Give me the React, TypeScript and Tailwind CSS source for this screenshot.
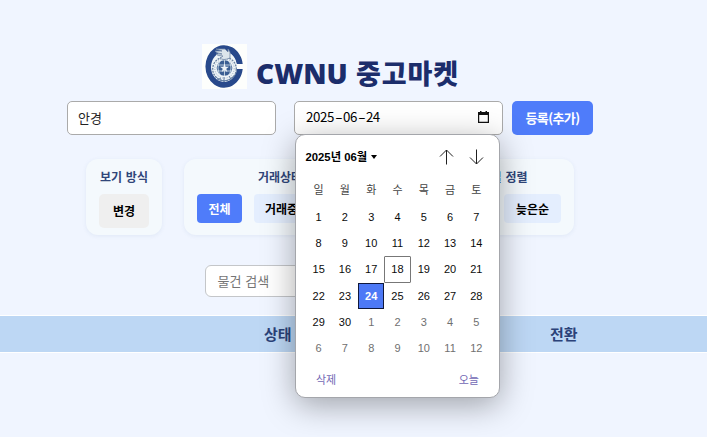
import React from "react";

const weekdays = ["일", "월", "화", "수", "목", "금", "토"];
const days = [
  ...Array.from({ length: 30 }, (_, i) => ({ n: i + 1, out: false })),
  ...Array.from({ length: 12 }, (_, i) => ({ n: i + 1, out: true })),
];

function Logo() {
  return (
    <svg viewBox="0 0 45 45" className="h-[45px] w-[45px] shrink-0 bg-[#fdfefc]">
      <path d="M40.700 25A18.700 21.200 0 1 1 40.700 20H34.500A12 15 0 1 0 34.500 25Z" fill="#28498b" />
      <ellipse cx="22" cy="23" rx="13" ry="15" fill="#eff5f8" />
      <circle cx="22.500" cy="25" r="11.800" fill="none" stroke="#68809f" strokeWidth="1.300" strokeDasharray="2 1" />
      <circle cx="22.500" cy="24.500" r="9.700" fill="none" stroke="#9badc1" strokeWidth="1" strokeDasharray="1 1.400" />
      <circle cx="22.500" cy="24" r="7.800" fill="#3b5f93" />
      <path d="M15 21h15M15 27h15M22.500 16v16M18 17q-4 7 0 14M27 17q4 7 0 14" fill="none" stroke="#dce7ee" strokeWidth=".8" />
      <path d="M22.500 19.500l1.100 3.200H27l-2.700 2 1 3.200-2.800-1.900-2.800 1.900 1-3.200-2.700-2h3.400z" fill="#eef4f8" />
      <path d="M14 5h9l3 3V5l2 3v6q-7 3-10 0 2-1 3-2-6 0-7-2h6q-6-1-7-3h7z" fill="#dce6ec" stroke="#6c84a5" strokeWidth=".8" />
      <path d="M13 32q4 5 9 5t10-5M15 36l4-2m3 4v-5m7 2l-2-3" fill="none" stroke="#617da3" strokeWidth="1" />
    </svg>
  );
}

function Card({ children, className }: { children: React.ReactNode; className: string }) {
  return (
    <section className={`flex h-[76px] rounded-[12px] bg-[#f4f9fd] pt-[7px] shadow-[0_1px_4px_rgba(70,100,160,0.09)] ${className}`}>
      {children}
    </section>
  );
}

function Title({ children }: { children: React.ReactNode }) {
  return <h2 className="h-5 whitespace-nowrap pt-px text-center text-[12px] font-bold leading-5 text-[#30467a] [word-spacing:1px]">{children}</h2>;
}

function DatePicker() {
  return (
    <div className="absolute left-px top-[33px] z-10 h-[264px] w-[205px] rounded-[10px] border border-[#a4a6ab] bg-white px-[9.5px] font-['Liberation_Sans','Noto_Sans_CJK_KR',sans-serif] text-[11px] text-[#0b0b0b] shadow-[0_7px_32px_rgba(0,0,0,0.34)]">
      <div className="flex h-[43px] items-center">
        <strong className="whitespace-nowrap text-[11.3px] leading-4 text-black">2025년 06월</strong>
        <span className="ml-1 border-x-[3.5px] border-t-4 border-x-transparent border-t-black" />
        <svg className="ml-auto h-4 w-[15px]" viewBox="0 0 15 16" fill="none" stroke="#202020">
          <path d="M7.500 1v14.500M1 7.500l6.500-6.500L14 7.500" />
        </svg>
        <svg className="ml-[15px] mr-1.5 h-4 w-[15px]" viewBox="0 0 15 16" fill="none" stroke="#202020">
          <path d="M7.500.5V15M1 8.500L7.500 15 14 8.500" />
        </svg>
      </div>
      <div className="grid h-[26px] grid-cols-7 text-center text-[#444]">
        {weekdays.map((day) => <span key={day} className="h-5 pt-1 leading-4">{day}</span>)}
      </div>
      <div className="grid auto-rows-[26.2px] grid-cols-7 text-center leading-4">
        {days.map((day, i) => (
          <span
            key={i}
            className={`flex items-center justify-center border ${
              i === 23
                ? "border-[#10183b] bg-[#4d79f6] font-bold text-white"
                : i === 17
                  ? "rounded-[1px] border-[#777]"
                  : day.out
                    ? "border-transparent text-[#707070]"
                    : "border-transparent"
            }`}
          >
            {day.n}
          </span>
        ))}
      </div>
      <div className="flex justify-between px-[10.5px] pt-[11px] leading-4 text-[#7268b5]">
        <span>삭제</span>
        <span>오늘</span>
      </div>
    </div>
  );
}

export default function App() {
  return (
    <main className="h-[437px] w-[707px] overflow-hidden bg-[#f0f5ff] font-['Noto_Sans_CJK_KR',sans-serif]">
      <header className="flex h-[101px] pl-[202px] pt-11">
        <Logo />
        <h1 className="ml-[9px] mt-[9px] flex whitespace-pre text-[27px] font-black leading-10 text-[#1c2d6b]">
          <span className="w-[100px] font-['Noto_Sans',sans-serif] text-[28px]">CWNU </span>
          <span className="tracking-[0.9px]">중고마켓</span>
        </h1>
      </header>

      <form className="flex h-[34px] pl-[67px] text-[13px]">
        <div className="h-[34px] w-[209px] rounded-[5px] border border-[#aaa] bg-white pl-2.5 leading-8 text-[#222]">안경</div>
        <div className="relative ml-[18px] h-[34px] w-[209px]">
          <div className="flex h-full items-center justify-between rounded-[5px] border border-[#aaa] bg-white pl-[11px] pr-[13px] text-[13.3px] font-normal text-black">
            <span className="whitespace-nowrap pb-0.5 tracking-[-0.4px]">
              2025<span className="inline-block w-[9px] scale-x-[1.7] text-center">-</span>06
              <span className="inline-block w-[9px] scale-x-[1.7] text-center">-</span>24
            </span>
            <svg className="mb-0.5 h-3 w-[11px]" viewBox="0 0 11 12">
              <path d="M2 0h1.500v1h4V0H9v1h2v11H0V1h2zM1.200 4v6.800h8.600V4z" fill="#111" fillRule="evenodd" />
            </svg>
          </div>
          <DatePicker />
        </div>
        <button type="button" className="ml-[9px] h-[34px] w-[81px] rounded-[5px] bg-[#4f7cfa] text-[13px] font-bold tracking-[-0.6px] text-white">등록(추가)</button>
      </form>

      <div className="flex gap-[22px] pl-[86px] pt-6">
        <Card className="w-[76px] flex-col items-center">
          <Title>보기 방식</Title>
          <button className="mt-2 h-[34px] w-[50px] rounded-[5px] bg-[#efefef] text-[12px] font-bold text-black">변경</button>
        </Card>
        <Card className="w-[390px] justify-between px-[13px]">
          <div className="w-[166px]">
            <Title>거래상태</Title>
            <div className="mt-2 flex gap-3 text-[12px] font-bold">
              <button className="h-[29px] w-[45px] rounded-[4px] bg-[#4f7cfa] text-white">전체</button>
              <button className="h-[29px] w-[55px] rounded-[4px] bg-[#e4eefe] text-black">거래중</button>
            </div>
          </div>
          <div className="w-[126px]">
            <Title>등록일 정렬</Title>
            <div className="mt-2 flex justify-between text-[12px] font-bold">
              <button className="h-[29px] w-[57px] rounded-[4px] bg-[#e4eefe]">빠른순</button>
              <button className="h-[29px] w-[57px] rounded-[4px] bg-[#e4eefe]">늦은순</button>
            </div>
          </div>
        </Card>
      </div>

      <div className="pl-[205px] pt-[30px]">
        <div className="h-8 w-[250px] rounded-[6px] border border-[#c4c6c9] bg-white pl-[11.5px] text-[13px] leading-[29px] text-[#757575] [word-spacing:1px]">물건 검색</div>
      </div>

      <div className="mt-[18px] flex h-[38px] border-y border-white bg-[#bdd7f4] pl-[264px] text-[15px] font-bold leading-9 text-[#2b4279]">
        <span className="w-[286px]">상태</span>
        <span>전환</span>
      </div>
    </main>
  );
}
